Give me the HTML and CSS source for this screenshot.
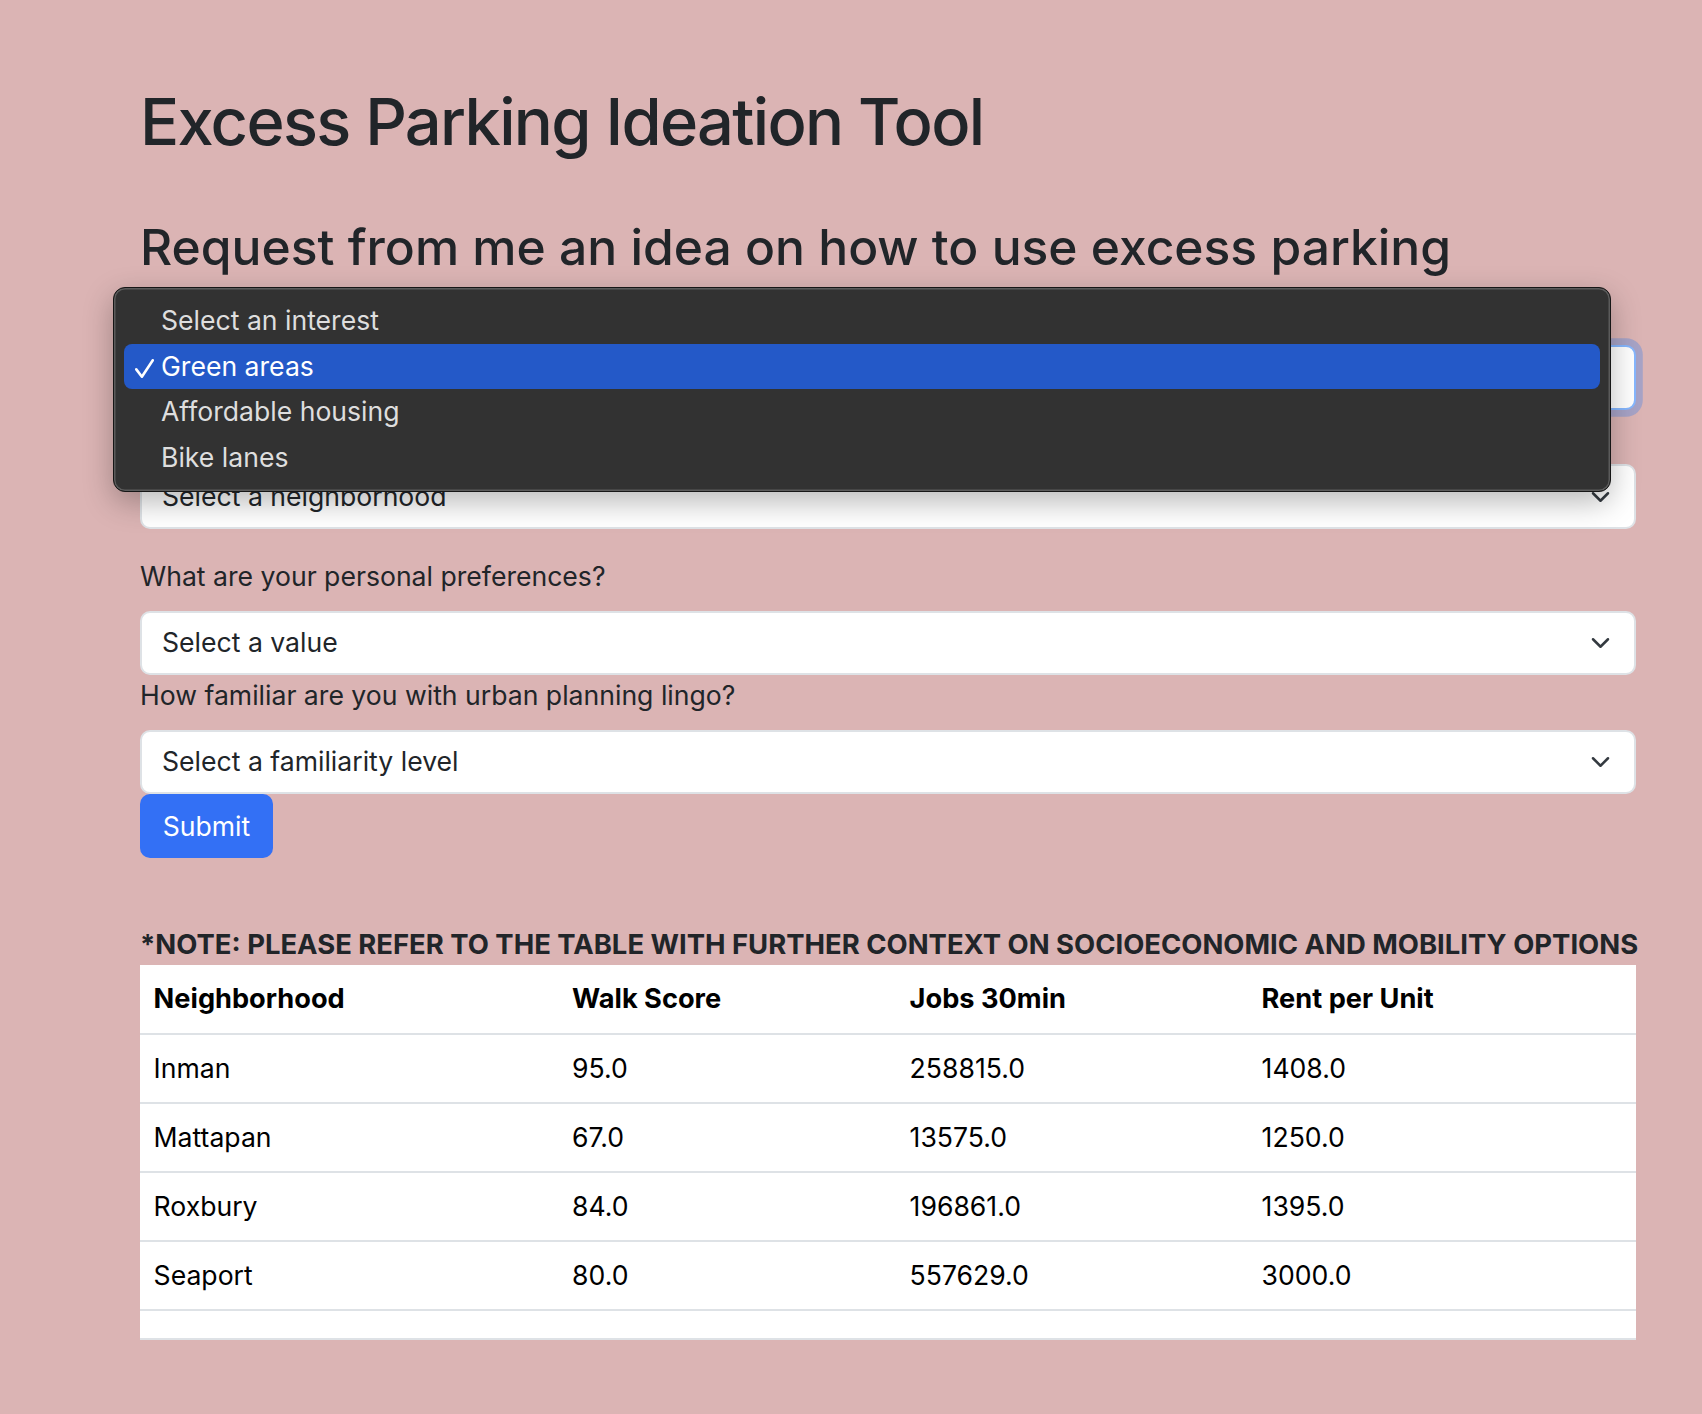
FILE: index.html
```html
<!DOCTYPE html>
<html lang="en">
<head>
<meta charset="utf-8">
<title>Excess Parking Ideation Tool</title>
<link rel="stylesheet" href="styles.css">
</head>
<body>
<main class="page">
  <h1 class="title">Excess Parking Ideation Tool</h1>
  <h2 class="subtitle">Request from me an idea on how to use excess parking</h2>

  <form class="form">
    <label class="label covered">What are you interested in?</label>
    <div class="select-wrap">
      <div class="select is-focused">
        <span class="covered">Green areas</span>
        <svg class="chevron" viewBox="0 0 16 16" width="27" height="20"><path d="M2 5l6 6 6-6" fill="none" stroke="#343a40" stroke-width="2" stroke-linecap="round" stroke-linejoin="round"/></svg>
      </div>
      <div class="dropdown">
        <div class="option">Select an interest</div>
        <div class="option is-selected">
          <svg class="check" viewBox="0 0 19 19" width="19" height="19"><path d="M1.3 10.4 L6.9 17.7 L17.8 1.3" fill="none" stroke="#fff" stroke-width="2.6" stroke-linecap="round" stroke-linejoin="round"/></svg>
          <span>Green areas</span>
        </div>
        <div class="option">Affordable housing</div>
        <div class="option">Bike lanes</div>
      </div>
    </div>

    <label class="label covered">Which neighborhood are you interested in?</label>
    <div class="select gap-after">
      <span>Select a neighborhood</span>
      <svg class="chevron" viewBox="0 0 16 16" width="27" height="20"><path d="M2 5l6 6 6-6" fill="none" stroke="#343a40" stroke-width="2" stroke-linecap="round" stroke-linejoin="round"/></svg>
    </div>

    <label class="label">What are your personal preferences?</label>
    <div class="select">
      <span>Select a value</span>
      <svg class="chevron" viewBox="0 0 16 16" width="27" height="20"><path d="M2 5l6 6 6-6" fill="none" stroke="#343a40" stroke-width="2" stroke-linecap="round" stroke-linejoin="round"/></svg>
    </div>

    <label class="label">How familiar are you with urban planning lingo?</label>
    <div class="select">
      <span>Select a familiarity level</span>
      <svg class="chevron" viewBox="0 0 16 16" width="27" height="20"><path d="M2 5l6 6 6-6" fill="none" stroke="#343a40" stroke-width="2" stroke-linecap="round" stroke-linejoin="round"/></svg>
    </div>

    <button type="button" class="btn">Submit</button>
  </form>

  <p class="note">*NOTE: PLEASE REFER TO THE TABLE WITH FURTHER CONTEXT ON SOCIOECONOMIC AND MOBILITY OPTIONS</p>

  <table class="data">
    <colgroup>
      <col class="c1"><col class="c2"><col class="c3"><col class="c4">
    </colgroup>
    <thead>
      <tr><th>Neighborhood</th><th>Walk Score</th><th>Jobs 30min</th><th>Rent per Unit</th></tr>
    </thead>
    <tbody>
      <tr><td>Inman</td><td>95.0</td><td>258815.0</td><td>1408.0</td></tr>
      <tr><td>Mattapan</td><td>67.0</td><td>13575.0</td><td>1250.0</td></tr>
      <tr><td>Roxbury</td><td>84.0</td><td>196861.0</td><td>1395.0</td></tr>
      <tr><td>Seaport</td><td>80.0</td><td>557629.0</td><td>3000.0</td></tr>
      <tr class="empty"><td></td><td></td><td></td><td></td></tr>
    </tbody>
  </table>
</main>
</body>
</html>
```

FILE: styles.css
```css
* { box-sizing: border-box; }

html, body { margin: 0; padding: 0; }

body {
  background: #dbb4b4;
  color: #212529;
  font-family: Inter, "Noto Sans", sans-serif;
  font-size: 26.6px;
  line-height: 40.8px;
}

.page {
  width: 1496px;
  margin-left: 140px;
  padding-top: 82px;
}

.title {
  margin: 0;
  font-size: 65px;
  line-height: 80px;
  font-weight: 500;
  letter-spacing: -1.7px;
}

.subtitle {
  margin: 55px 0 0;
  font-size: 49.75px;
  line-height: 60px;
  font-weight: 500;
}

.form {
  margin-top: 14px;
  display: flex;
  flex-direction: column;
  align-items: flex-start;
}

.label {
  display: block;
  margin-bottom: 13.6px;
}

/* text that sits under the open menu and cannot be seen */
.covered { visibility: hidden; }

.select-wrap {
  position: relative;
  width: 100%;
}

.select {
  width: 100%;
  height: 64.6px;
  background: #fff;
  border: 2px solid #dee2e6;
  border-radius: 10px;
  padding: 0 20px;
  display: flex;
  align-items: center;
  justify-content: space-between;
}

.select.is-focused {
  border-color: #86b7fe;
  box-shadow: 0 0 0 6.8px rgba(13, 110, 253, 0.25);
}

.select.gap-after { margin-bottom: 27.2px; }

.chevron { flex: none; }

.btn {
  width: 133px;
  height: 64px;
  border: 0;
  border-radius: 10px;
  background: #3370f5;
  color: #fff;
  font: inherit;
  padding: 0;
}

.note {
  margin: 66px 0 0;
  font-size: 27.45px;
  font-weight: 700;
  white-space: nowrap;
}

.data {
  width: 1496px;
  table-layout: fixed;
  border-collapse: separate;
  border-spacing: 0;
  background: #fff;
  color: #000;
}

.c1 { width: 418.5px; }
.c2 { width: 337.5px; }
.c3 { width: 352px; }
.c4 { width: 388px; }

.data th,
.data td {
  padding: 0 13.6px;
  text-align: left;
  vertical-align: middle;
  border-bottom: 2px solid #dee2e6;
}

.data th { height: 70px; font-size: 27.2px; font-weight: 700; }
.data td { height: 69px; font-weight: 400; }
.data .empty td { height: 29px; }

/* open native-style menu of the first select */
.dropdown {
  position: absolute;
  left: -27px;
  top: -58.5px;
  width: 1498px;
  height: 205px;
  padding: 10.5px 10px;
  background: #323232;
  border: 1px solid #161616;
  border-radius: 12px;
  box-shadow: inset 0 0 0 1.5px rgba(255, 255, 255, 0.2), 0 10px 30px rgba(0, 0, 0, 0.28);
  color: #dedede;
  z-index: 5;
}

.option {
  height: 45.5px;
  line-height: 45.5px;
  padding-left: 37px;
  border-radius: 8px;
  display: flex;
  align-items: center;
}

.option.is-selected {
  background: #2459c8;
  color: #fff;
  padding-left: 11px;
}

.check { flex: none; margin-right: 7px; margin-top: 3px; }
```
